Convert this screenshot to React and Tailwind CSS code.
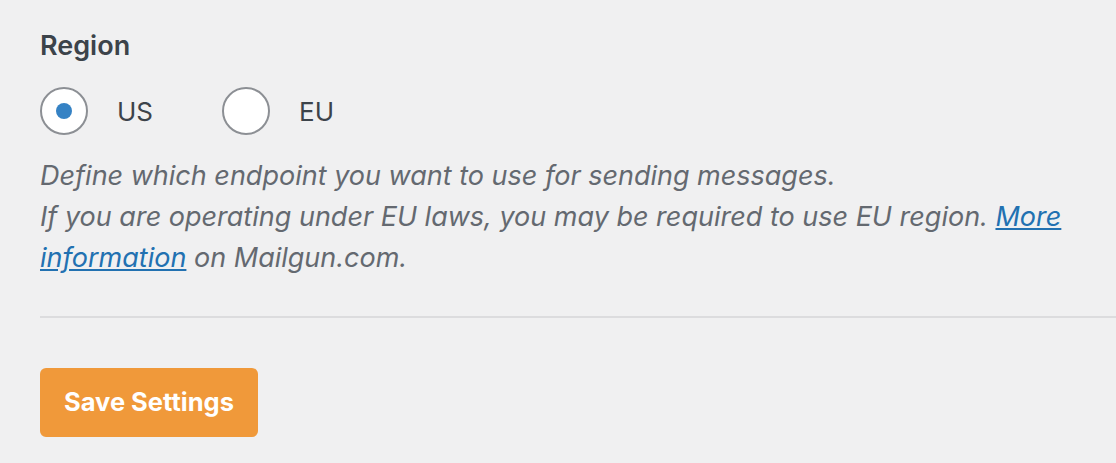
import React, { useState } from 'react'

export default function App() {
  const [region, setRegion] = useState('us')

  return (
    <div className="min-h-[463px] bg-[#f0f0f1] pl-10 pt-[28px] font-['Inter','Liberation_Sans',sans-serif]">
      <h3 className="text-[27px] font-semibold leading-[36px] text-[#3c434a]">Region</h3>

      {/* radio group */}
      <div className="mt-[23px] flex items-center">
        <label className="flex items-center cursor-pointer" onClick={() => setRegion('us')}>
          <span className="flex h-12 w-12 items-center justify-center rounded-full border-2 border-[#8c8f94] bg-white">
            {region === 'us' && <span className="h-4 w-4 rounded-full bg-[#3582c4]" />}
          </span>
          <span className="ml-[29px] text-[26px] text-[#3c434a]">US</span>
        </label>
        <label className="ml-[69px] flex items-center cursor-pointer" onClick={() => setRegion('eu')}>
          <span className="flex h-12 w-12 items-center justify-center rounded-full border-2 border-[#8c8f94] bg-white">
            {region === 'eu' && <span className="h-4 w-4 rounded-full bg-[#3582c4]" />}
          </span>
          <span className="ml-[29px] text-[26px] text-[#3c434a]">EU</span>
        </label>
      </div>

      <p className="mt-[20px] pr-10 text-[27px] italic leading-[41px] text-[#646970]">
        Define which endpoint you want to use for sending messages.
        <br />
        If you are operating under EU laws, you may be required to use EU region.{' '}
        <a href="#" className="text-[#2271b1] underline">More information</a> on Mailgun.com.
      </p>

      <div className="mt-[38px] h-[2px] bg-[#dcdcde]" />

      <button className="mt-[50px] h-[69px] w-[218px] rounded-md bg-[#f0993a] text-[25.5px] font-bold text-white">
        Save Settings
      </button>
    </div>
  )
}
